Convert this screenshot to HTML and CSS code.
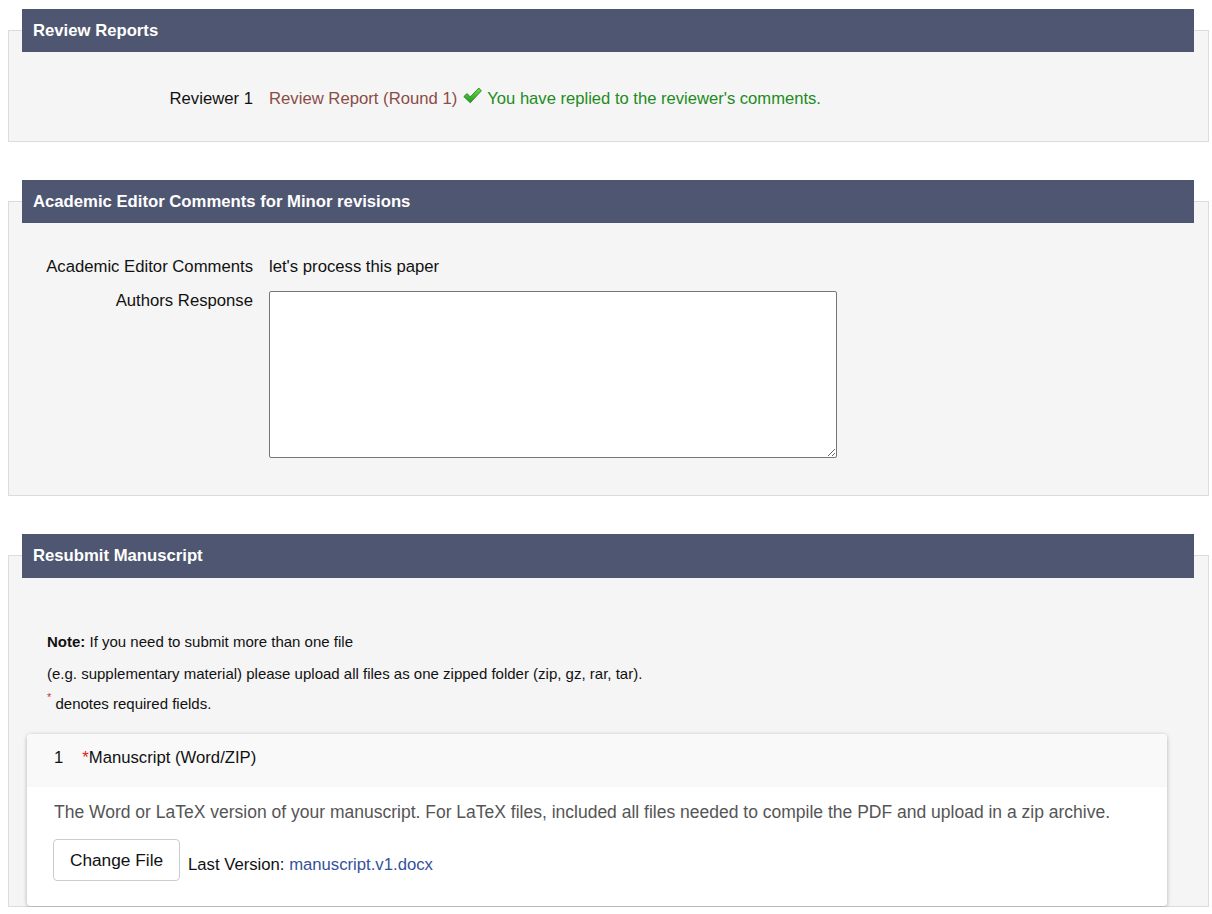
FILE: index.html
```html
<!DOCTYPE html>
<html>
<head>
    <title>Resubmit Manuscript</title>
    <link rel="stylesheet" href="styles.css">
</head>
<body>
    <div class="page">
        <div class="panel">
            <div class="panel-head">Review Reports</div>
            <div class="panel-body rows first">
                <div class="label">Reviewer 1</div>
                <div class="value">
                    <a class="report-link" href="#">Review Report (Round 1)</a>
                    <svg class="check" width="19" height="18" viewBox="0 0 19 18">
                        <defs>
                            <linearGradient id="g" x1="0" y1="0" x2="0" y2="1">
                                <stop offset="0" stop-color="#72d84c"/>
                                <stop offset="1" stop-color="#1f9a1c"/>
                            </linearGradient>
                        </defs>
                        <path d="M0.8 9.6 L4 6.6 L7.3 9.8 L15.8 1 L18.4 3.8 L7.3 15.8 Z" fill="url(#g)" stroke="#1b7d18" stroke-width="0.8" stroke-linejoin="round"/>
                    </svg>
                    <span class="replied">You have replied to the reviewer's comments.</span>
                </div>
            </div>
        </div>

        <div class="panel">
            <div class="panel-head">Academic Editor Comments for Minor revisions</div>
            <div class="panel-body rows second">
                <div class="label">Academic Editor Comments</div>
                <div class="value">let's process this paper</div>
                <div class="label">Authors Response</div>
                <div class="value"><textarea class="response"></textarea></div>
            </div>
        </div>

        <div class="panel">
            <div class="panel-head tall">Resubmit Manuscript</div>
            <div class="panel-body third">
                <div class="note">
                    <p class="note-line"><b>Note:</b> If you need to submit more than one file</p>
                    <p class="note-line">(e.g. supplementary material) please upload all files as one zipped folder (zip, gz, rar, tar).</p>
                    <p class="note-line short"><sup class="req">*</sup> denotes required fields.</p>
                </div>
                <div class="file-card">
                    <div class="file-head">
                        <span class="file-num">1</span>
                        <span><span class="req-mark">*</span>Manuscript (Word/ZIP)</span>
                    </div>
                    <div class="file-body">
                        <p class="file-desc">The Word or LaTeX version of your manuscript. For LaTeX files, included all files needed to compile the PDF and upload in a zip archive.</p>
                        <div class="file-actions">
                            <button type="button" class="change-btn">Change File</button>
                            <span class="last-version">Last Version: <a href="#">manuscript.v1.docx</a></span>
                        </div>
                    </div>
                </div>
            </div>
        </div>
    </div>
</body>
</html>
```

FILE: styles.css
```css
body {
    margin: 0;
    font-family: "Liberation Sans", Arial, sans-serif;
    font-size: 16.7px;
    color: #111;
    background-color: #fff;
}

.page {
    padding: 30px 3px 0 8px;
    display: flex;
    flex-direction: column;
    gap: 59px;
}

.panel {
    background-color: #f5f5f5;
    border: 1px solid #dcdcdc;
    padding: 0 14px 0 13px;
}

.panel-head {
    margin-top: -22px;
    height: 43px;
    background-color: #4f5671;
    color: #fff;
    font-weight: bold;
    font-size: 16.7px;
    padding-left: 11px;
    display: flex;
    align-items: center;
    box-sizing: border-box;
}

.panel-head.tall {
    height: 44px;
}

.rows {
    display: grid;
    grid-template-columns: 231px 1fr;
    column-gap: 16px;
    row-gap: 14px;
    line-height: 20px;
}

.rows.first {
    padding: 37px 0 32px 0;
}

.rows.second {
    padding: 34px 0 37px 0;
}

.label {
    text-align: right;
}

.value {
    display: flex;
    align-items: center;
}

.report-link {
    color: #8b4c46;
    text-decoration: none;
}

.check {
    margin: -6px 5px 0 6px;
}

.replied {
    color: #228b22;
    font-size: 16.6px;
}

.response {
    width: 568px;
    height: 167px;
    box-sizing: border-box;
    border: 1px solid #767676;
    border-radius: 2px;
    background-color: #fff;
    margin: 0;
    display: block;
}

.third {
    padding: 48px 0 0 0;
}

.note {
    padding-left: 25px;
    font-size: 15px;
}

.note-line {
    margin: 0;
    line-height: 32px;
}

.note-line.short {
    line-height: 28px;
}

.req {
    color: #c33;
    font-size: 11px;
    vertical-align: 8px;
    line-height: 0;
}

.file-card {
    margin: 16px 27px 0 5px;
    background-color: #fff;
    border-radius: 4px;
    box-shadow: 0 1px 4px rgba(0, 0, 0, 0.28);
    overflow: hidden;
}

.file-head {
    background-color: #f9f9f9;
    height: 53px;
    padding: 0 0 6px 27px;
    box-sizing: border-box;
    display: flex;
    align-items: center;
    gap: 19px;
}

.req-mark {
    color: #d22;
}

.file-body {
    padding: 14px 20px 25px 27px;
}

.file-desc {
    margin: 0;
    color: #555;
    font-size: 17.5px;
    line-height: 22px;
}

.file-actions {
    margin-top: 16px;
    display: flex;
    align-items: center;
    margin-left: -1px;
}

.change-btn {
    width: 127px;
    height: 42px;
    background-color: #fff;
    border: 1px solid #ccc;
    border-radius: 4px;
    font-family: "Liberation Sans", Arial, sans-serif;
    font-size: 17.3px;
    color: #111;
    padding: 0;
}

.last-version {
    margin: 10px 0 0 8px;
}

.last-version a {
    color: #34529a;
    text-decoration: none;
}
```
